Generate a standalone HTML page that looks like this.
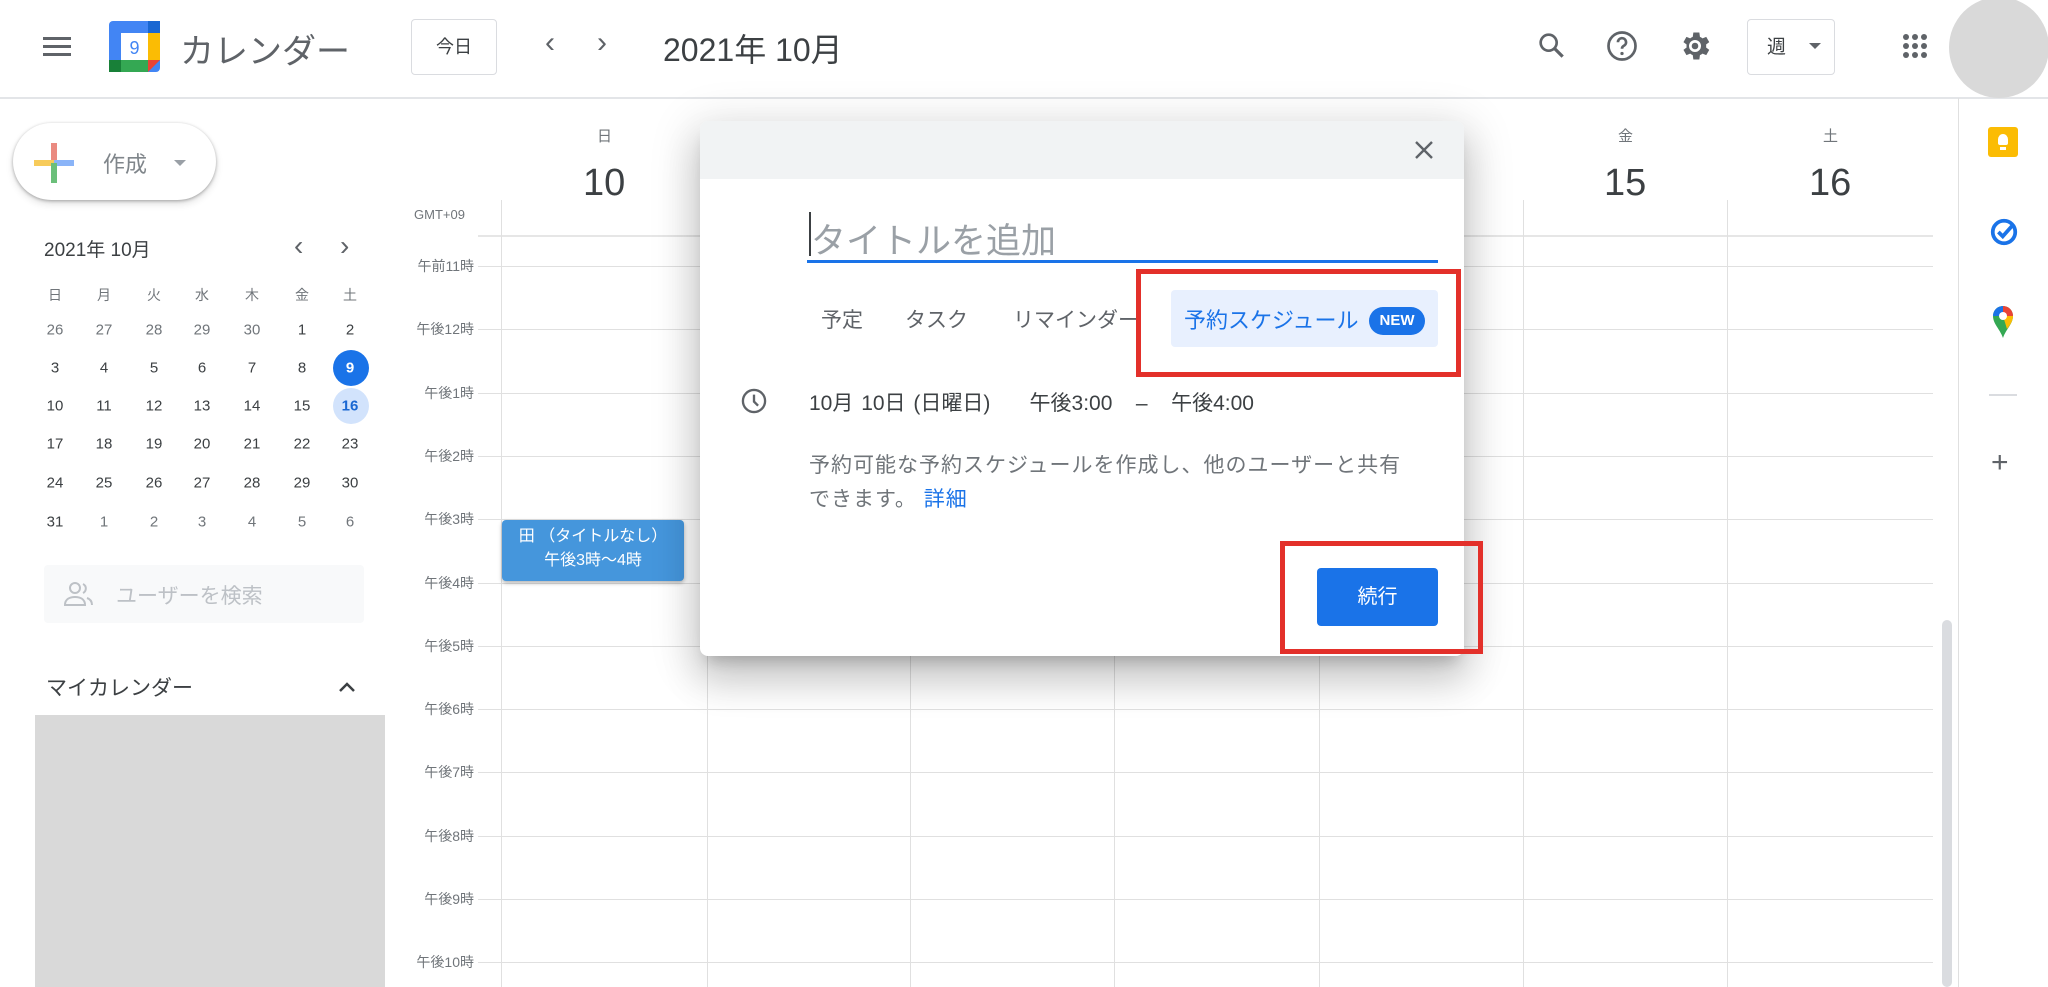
<!DOCTYPE html>
<html><head><meta charset="utf-8"><style>
*{margin:0;padding:0;box-sizing:border-box}
body{width:2048px;height:987px;overflow:hidden;background:#fff;position:relative;font-family:"Liberation Sans","Noto Sans CJK JP",sans-serif;color:#3c4043}
.a{position:absolute}
.t{position:absolute;white-space:nowrap}
.hl{position:absolute;left:478px;width:1455px;height:1px;background:#e0e0e0}
.vl{position:absolute;top:200px;bottom:0;width:1px;background:#e0e0e0}
.tl{position:absolute;right:1574px;font-size:14px;color:#70757a;transform:translateY(-50%)}
.mc{position:absolute;width:40px;text-align:center;font-size:15px;color:#3c4043;transform:translate(-50%,-50%)}
</style></head><body>
<!-- header -->
<div class="a" style="left:0;top:97px;width:2048px;height:2px;background:#e3e5e8"></div>
<svg class="a" style="left:43px;top:34px" width="28" height="24"><rect y="3" width="28" height="3" fill="#5f6368"/><rect y="11" width="28" height="3" fill="#5f6368"/><rect y="19" width="28" height="3" fill="#5f6368"/></svg>
<svg class="a" style="left:109px;top:21px" width="51" height="51" viewBox="0 0 51 51">
<rect x="0" y="0" width="51" height="51" rx="4" fill="#4285f4"/>
<rect x="39" y="12" width="12" height="27" fill="#fbbc04"/>
<rect x="0" y="39" width="39" height="12" fill="#34a853"/>
<rect x="0" y="39" width="12" height="12" fill="#188038"/>
<rect x="39" y="0" width="12" height="12" fill="#1967d2"/>
<polygon points="39,39 51,39 39,51" fill="#ea4335"/>
<rect x="12" y="12" width="27" height="27" fill="#fff"/>
<text x="25.5" y="33" font-size="18" text-anchor="middle" fill="#4285f4" font-family="Liberation Sans">9</text></svg>
<div class="t" style="left:180px;top:24px;font-size:34px;color:#5f6368">カレンダー</div>
<div class="a" style="left:411px;top:19px;width:86px;height:56px;border:1px solid #dadce0;border-radius:4px;font-size:18px;text-align:center;line-height:54px">今日</div>
<div class="t" style="left:545px;top:26px;font-size:30px;color:#5f6368">‹</div>
<div class="t" style="left:597px;top:26px;font-size:30px;color:#5f6368">›</div>
<div class="t" style="left:663px;top:25px;font-size:32px;color:#3c4043">2021年 10月</div>
<svg class="a" style="left:1536px;top:30px" width="32" height="32" viewBox="0 0 24 24"><circle cx="9.5" cy="9.5" r="6" fill="none" stroke="#5f6368" stroke-width="2"/><path d="M14 14l6 6" stroke="#5f6368" stroke-width="2.4"/></svg>
<svg class="a" style="left:1604px;top:28px" width="36" height="36" viewBox="0 0 24 24"><circle cx="12" cy="12" r="9" fill="none" stroke="#5f6368" stroke-width="1.8"/><path d="M9.3 9.5a2.7 2.7 0 1 1 3.7 2.5c-.7.4-1 .9-1 1.8" fill="none" stroke="#5f6368" stroke-width="1.8"/><circle cx="12" cy="17" r="1.1" fill="#5f6368"/></svg>
<svg class="a" style="left:1677px;top:28px" width="36" height="36" viewBox="0 0 24 24"><path fill="#5f6368" d="M19.4 13a7.5 7.5 0 0 0 0-2l2.1-1.6-2-3.5-2.5 1a7 7 0 0 0-1.7-1L14.9 3h-4l-.4 2.9a7 7 0 0 0-1.7 1l-2.5-1-2 3.5L6.4 11a7.5 7.5 0 0 0 0 2l-2.1 1.6 2 3.5 2.5-1a7 7 0 0 0 1.7 1l.4 2.9h4l.4-2.9a7 7 0 0 0 1.7-1l2.5 1 2-3.5zM12 16a4 4 0 1 1 0-8 4 4 0 0 1 0 8z"/><circle cx="12" cy="12" r="2.2" fill="#5f6368"/></svg>
<div class="a" style="left:1747px;top:19px;width:88px;height:56px;border:1px solid #dadce0;border-radius:4px"></div>
<div class="t" style="left:1767px;top:32px;font-size:19px">週</div>
<div class="a" style="left:1809px;top:43px;border-left:6px solid transparent;border-right:6px solid transparent;border-top:6px solid #5f6368"></div>
<svg class="a" style="left:1902px;top:33px" width="26" height="26"><g fill="#5f6368"><circle cx="4" cy="4" r="3"/><circle cx="13" cy="4" r="3"/><circle cx="22" cy="4" r="3"/><circle cx="4" cy="13" r="3"/><circle cx="13" cy="13" r="3"/><circle cx="22" cy="13" r="3"/><circle cx="4" cy="22" r="3"/><circle cx="13" cy="22" r="3"/><circle cx="22" cy="22" r="3"/></g></svg>
<div class="a" style="left:1949px;top:-3px;width:100px;height:101px;border-radius:50%;background:#d9d9d9"></div>

<!-- left sidebar -->
<div class="a" style="left:13px;top:123px;width:203px;height:77px;border-radius:40px;background:#fff;box-shadow:0 1px 3px rgba(0,0,0,.3),0 4px 8px rgba(0,0,0,.12)"></div>
<svg class="a" style="left:34px;top:143px" width="40" height="40"><rect x="17" y="0" width="6" height="20" fill="#ea8a80"/><rect x="0" y="17" width="20" height="6" fill="#f7cb5a"/><rect x="20" y="17" width="20" height="6" fill="#8ab4f8"/><rect x="17" y="20" width="6" height="20" fill="#6bbf7a"/></svg>
<div class="t" style="left:103px;top:147px;font-size:22px;color:#80868b">作成</div>
<div class="a" style="left:174px;top:160px;border-left:6px solid transparent;border-right:6px solid transparent;border-top:6px solid #9aa0a6"></div>

<div class="t" style="left:44px;top:235px;font-size:19px;color:#3c4043">2021年 10月</div>
<div class="t" style="left:294px;top:230px;font-size:28px;color:#5f6368">‹</div>
<div class="t" style="left:340px;top:230px;font-size:28px;color:#5f6368">›</div>
<div class="a" style="left:333px;top:350px;width:36px;height:36px;border-radius:50%;background:#1a73e8"></div>
<div class="a" style="left:333px;top:388px;width:36px;height:36px;border-radius:50%;background:#d2e3fc"></div>
<div id="mc"></div>

<div class="a" style="left:44px;top:565px;width:320px;height:58px;border-radius:4px;background:#f8f9fa"></div>
<svg class="a" style="left:63px;top:580px" width="32" height="28" viewBox="0 0 32 28"><circle cx="12" cy="8" r="5" fill="none" stroke="#bdc1c6" stroke-width="2"/><path d="M2 25c0-6 5-8 10-8s10 2 10 8z" fill="none" stroke="#bdc1c6" stroke-width="2"/><path d="M20 4a5 5 0 0 1 0 9M24 18c3 1 5 3 5 7" fill="none" stroke="#bdc1c6" stroke-width="2"/></svg>
<div class="t" style="left:116px;top:580px;font-size:21px;color:#bdc1c6">ユーザーを検索</div>
<div class="t" style="left:46px;top:672px;font-size:21px;color:#3c4043">マイカレンダー</div>
<svg class="a" style="left:338px;top:680px" width="18" height="14"><path d="M2 11l7-7 7 7" fill="none" stroke="#3c4043" stroke-width="2.5"/></svg>
<div class="a" style="left:35px;top:715px;width:350px;height:272px;background:#d9d9d9"></div>

<!-- grid -->
<div class="t" style="left:414px;top:207px;font-size:13px;color:#70757a">GMT+09</div>
<div class="a" style="left:478px;top:235px;width:1455px;height:2px;background:#e6e6e6"></div>
<div id="grid"></div>
<div class="t" style="left:597px;top:125px;font-size:15px;color:#70757a">日</div>
<div class="t" style="left:583px;top:162px;font-size:38px;color:#3c4043">10</div>
<div class="t" style="left:1618px;top:125px;font-size:15px;color:#70757a">金</div>
<div class="t" style="left:1604px;top:162px;font-size:38px;color:#3c4043">15</div>
<div class="t" style="left:1823px;top:125px;font-size:15px;color:#70757a">土</div>
<div class="t" style="left:1809px;top:162px;font-size:38px;color:#3c4043">16</div>

<div class="a" style="left:502px;top:520px;width:182px;height:61px;border-radius:4px;background:#4596dc;box-shadow:0 2px 4px rgba(0,0,0,.3);color:#fff;font-size:16px;text-align:center;line-height:24px;padding-top:5px">田 （タイトルなし）<br>午後3時～4時</div>

<div class="a" style="left:1942px;top:620px;width:10px;height:367px;border-radius:5px;background:#dadce0"></div>
<!-- right bar -->
<div class="a" style="left:1958px;top:98px;width:1px;height:889px;background:#e0e0e0"></div>
<div class="a" style="left:1988px;top:127px;width:30px;height:30px;border-radius:3px;background:#fbbc04"></div>
<div class="a" style="left:1998px;top:134px;width:10px;height:11px;border-radius:50% 50% 2px 2px;background:#fff"></div>
<div class="a" style="left:2000px;top:147px;width:6px;height:3px;background:#fff"></div>
<svg class="a" style="left:1989px;top:217px" width="30" height="30" viewBox="0 0 24 24"><circle cx="12" cy="12" r="9" fill="none" stroke="#1a73e8" stroke-width="3"/><path d="M7.5 12l3.5 3.5 8-9" fill="none" stroke="#1a73e8" stroke-width="3"/></svg>
<svg class="a" style="left:1992px;top:305px" width="22" height="34" viewBox="0 0 22 34"><path d="M11 33C8 24 1 19 1 11a10 10 0 0 1 20 0c0 8-7 13-10 22z" fill="#34a853"/><path d="M1 11a10 10 0 0 1 10-10v10z" fill="#1a73e8"/><path d="M11 1a10 10 0 0 1 10 10h-10z" fill="#ea4335"/><path d="M21 11c0 5-3 9-6 13l-4-13z" fill="#fbbc04"/><circle cx="11" cy="11" r="4" fill="#fff"/></svg>
<div class="a" style="left:1989px;top:394px;width:28px;height:2px;background:#dadce0"></div>
<div class="t" style="left:1991px;top:446px;font-size:30px;color:#5f6368;font-weight:300">+</div>

<!-- dialog -->
<div class="a" style="left:700px;top:121px;width:764px;height:535px;background:#fff;border-radius:8px;box-shadow:0 24px 38px 3px rgba(0,0,0,.14),0 9px 46px 8px rgba(0,0,0,.12),0 11px 15px -7px rgba(0,0,0,.2);overflow:hidden">
<div class="a" style="left:0;top:0;width:764px;height:58px;background:#f1f3f4"></div>
</div>
<svg class="a" style="left:1414px;top:140px" width="20" height="20"><path d="M2 2l16 16M18 2L2 18" stroke="#5f6368" stroke-width="2.4"/></svg>
<div class="a" style="left:809px;top:212px;width:2px;height:44px;background:#3c4043"></div>
<div class="t" style="left:811px;top:213px;font-size:35px;color:#9aa0a6">タイトルを追加</div>
<div class="a" style="left:807px;top:260px;width:631px;height:3px;background:#1a73e8"></div>
<div class="t" style="left:821px;top:304px;font-size:21px;color:#5f6368">予定</div>
<div class="t" style="left:905px;top:304px;font-size:21px;color:#5f6368">タスク</div>
<div class="t" style="left:1013px;top:304px;font-size:21px;color:#5f6368">リマインダー</div>
<div class="a" style="left:1171px;top:290px;width:267px;height:57px;border-radius:4px;background:#e8f0fe"></div>
<div class="t" style="left:1184px;top:303px;font-size:22px;color:#1a73e8">予約スケジュール</div>
<div class="a" style="left:1369px;top:307px;width:56px;height:28px;border-radius:14px;background:#1a73e8;color:#fff;font-size:15px;font-weight:bold;text-align:center;line-height:28px">NEW</div>
<div class="a" style="left:1136px;top:269px;width:325px;height:108px;border:5px solid #e3302a"></div>
<svg class="a" style="left:740px;top:387px" width="28" height="28" viewBox="0 0 24 24"><circle cx="12" cy="12" r="9.5" fill="none" stroke="#5f6368" stroke-width="2"/><path d="M12 6.5v6l3.5 3.5" fill="none" stroke="#5f6368" stroke-width="2"/></svg>
<div class="t" style="left:809px;top:387px;font-size:21px;color:#3c4043;word-spacing:2px">10月 10日 (日曜日)&nbsp;&nbsp;&nbsp;&nbsp; 午後3:00 &nbsp;&nbsp;–&nbsp;&nbsp; 午後4:00</div>
<div class="t" style="left:809px;top:449px;font-size:21px;letter-spacing:1px;color:#70757a;line-height:34px">予約可能な予約スケジュールを作成し、他のユーザーと共有<br>できます。 <span style="color:#1a73e8">詳細</span></div>
<div class="a" style="left:1317px;top:568px;width:121px;height:58px;border-radius:4px;background:#1a73e8;color:#fff;font-size:20px;text-align:center;line-height:58px">続行</div>
<div class="a" style="left:1280px;top:541px;width:203px;height:113px;border:5px solid #e3302a"></div>

<script>
var g='',hours=['午前11時','午後12時','午後1時','午後2時','午後3時','午後4時','午後5時','午後6時','午後7時','午後8時','午後9時','午後10時'];
for(var i=0;i<12;i++){var y=266+i*63.3;g+='<div class="hl" style="top:'+Math.round(y)+'px"></div><div class="tl" style="top:'+Math.round(y)+'px">'+hours[i]+'</div>';}
var xs=[501,707,910,1114,1319,1523,1727];
xs.forEach(function(x,i){g+='<div class="vl" style="left:'+x+'px;top:'+(i==0||i>=5?200:500)+'px"></div>';});
document.getElementById('grid').innerHTML=g;
var cx=[55,104,154,202,252,302,350],ry=[295,330,368,406,444,483,522];
var rows=[['日','月','火','水','木','金','土'],[26,27,28,29,30,1,2],[3,4,5,6,7,8,9],[10,11,12,13,14,15,16],[17,18,19,20,21,22,23],[24,25,26,27,28,29,30],[31,1,2,3,4,5,6]];
var m='';
rows.forEach(function(r,j){r.forEach(function(v,k){var c=j==0?'#70757a':'#3c4043',fw='normal';
if(j==1&&k<5)c='#70757a';if(j==6&&k>0)c='#70757a';if(j==2&&k==6){c='#fff';fw='bold'}if(j==3&&k==6){c='#1967d2';fw='bold'}
var fs=j==0?14:15;
m+='<div class="mc" style="left:'+cx[k]+'px;top:'+ry[j]+'px;color:'+c+';font-weight:'+fw+';font-size:'+fs+'px">'+v+'</div>';});});
document.getElementById('mc').innerHTML=m;
</script>
</body></html>
